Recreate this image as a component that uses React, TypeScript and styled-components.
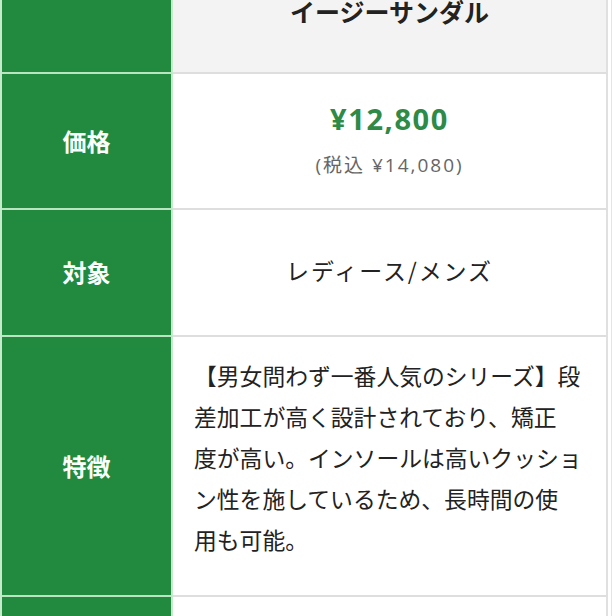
import { FC, ReactNode } from "react";
import styled, { createGlobalStyle } from "styled-components";

const GlobalStyle = createGlobalStyle`
  html, body {
    margin: 0;
    padding: 0;
    background: #ffffff;
  }
  body {
    font-family: "Noto Sans CJK JP", "Noto Sans", sans-serif;
    color: #222;
  }
`;

const Page = styled.div`
  width: 611px;
  height: 616px;
  overflow: hidden;
  border-right: 1px solid #e4e4e4;
`;

const SpecTable = styled.div`
  width: 606px;
  border-left: 2px solid #c6eacc;
`;

const Row = styled.div<{ $height: number }>`
  display: grid;
  grid-template-columns: 171px 435px;
  height: ${(p) => p.$height}px;
`;

const Label = styled.div`
  display: flex;
  align-items: center;
  justify-content: center;
  background: #228a3f;
  border-right: 2px solid #c6eacc;
  border-bottom: 2px solid #b9e6c1;
  color: #fbfffb;
  font-size: 24px;
  font-weight: 700;
  padding-bottom: 2px;
`;

const Value = styled.div<{ $head?: boolean; $align?: "top" | "center" }>`
  display: flex;
  flex-direction: column;
  align-items: center;
  justify-content: ${(p) => (p.$align === "top" ? "flex-start" : "center")};
  background: ${(p) => (p.$head ? "#f3f3f3" : "#ffffff")};
  border-right: 2px solid #e0e0e0;
  border-bottom: 2px solid #dedede;
`;

const ProductName = styled.div`
  font-size: 25px;
  font-weight: 700;
  line-height: 22px;
  color: #222;
`;

const Price = styled.div`
  font-family: "Open Sans", "Noto Sans", sans-serif;
  font-size: 29px;
  font-weight: 700;
  letter-spacing: 1.6px;
  color: #2d8a47;
  line-height: 32px;
  margin-bottom: 19px;
  margin-top: -4px;
`;

const TaxPrice = styled.div`
  font-family: "Open Sans", "Noto Sans CJK JP", sans-serif;
  font-size: 19px;
  color: #666;
  line-height: 22px;
  letter-spacing: 2px;
`;

const Target = styled.div`
  font-size: 23px;
  letter-spacing: 1.9px;
  color: #222;
  margin-bottom: 6px;
`;

const Description = styled.p`
  margin: 0;
  padding: 18px 18px 0 21px;
  align-self: stretch;
  font-size: 22.8px;
  line-height: 41px;
  color: #222;
  white-space: nowrap;
`;

const SpecRow: FC<{ label?: string; height: number; head?: boolean; align?: "top" | "center"; children?: ReactNode }> = ({
  label,
  height,
  head,
  align,
  children,
}) => (
  <Row $height={height}>
    <Label>{label}</Label>
    <Value $head={head} $align={align}>
      {children}
    </Value>
  </Row>
);

const descriptionLines = [
  "【男女問わず一番人気のシリーズ】段",
  "差加工が高く設計されており、矯正",
  "度が高い。インソールは高いクッショ",
  "ン性を施しているため、長時間の使",
  "用も可能。",
];

const App: FC = () => {
  return (
    <Page>
      <GlobalStyle />
      <SpecTable>
        <SpecRow height={74} head align="top">
          <ProductName>イージーサンダル</ProductName>
        </SpecRow>
        <SpecRow label="価格" height={136}>
          <Price>¥12,800</Price>
          <TaxPrice>(税込 ¥14,080)</TaxPrice>
        </SpecRow>
        <SpecRow label="対象" height={127}>
          <Target>レディース/メンズ</Target>
        </SpecRow>
        <SpecRow label="特徴" height={260} align="top">
          <Description>
            {descriptionLines.map((line, i) => (
              <span key={i}>
                {line}
                {i < descriptionLines.length - 1 && <br />}
              </span>
            ))}
          </Description>
        </SpecRow>
        <SpecRow height={60} />
      </SpecTable>
    </Page>
  );
};

export default App;
